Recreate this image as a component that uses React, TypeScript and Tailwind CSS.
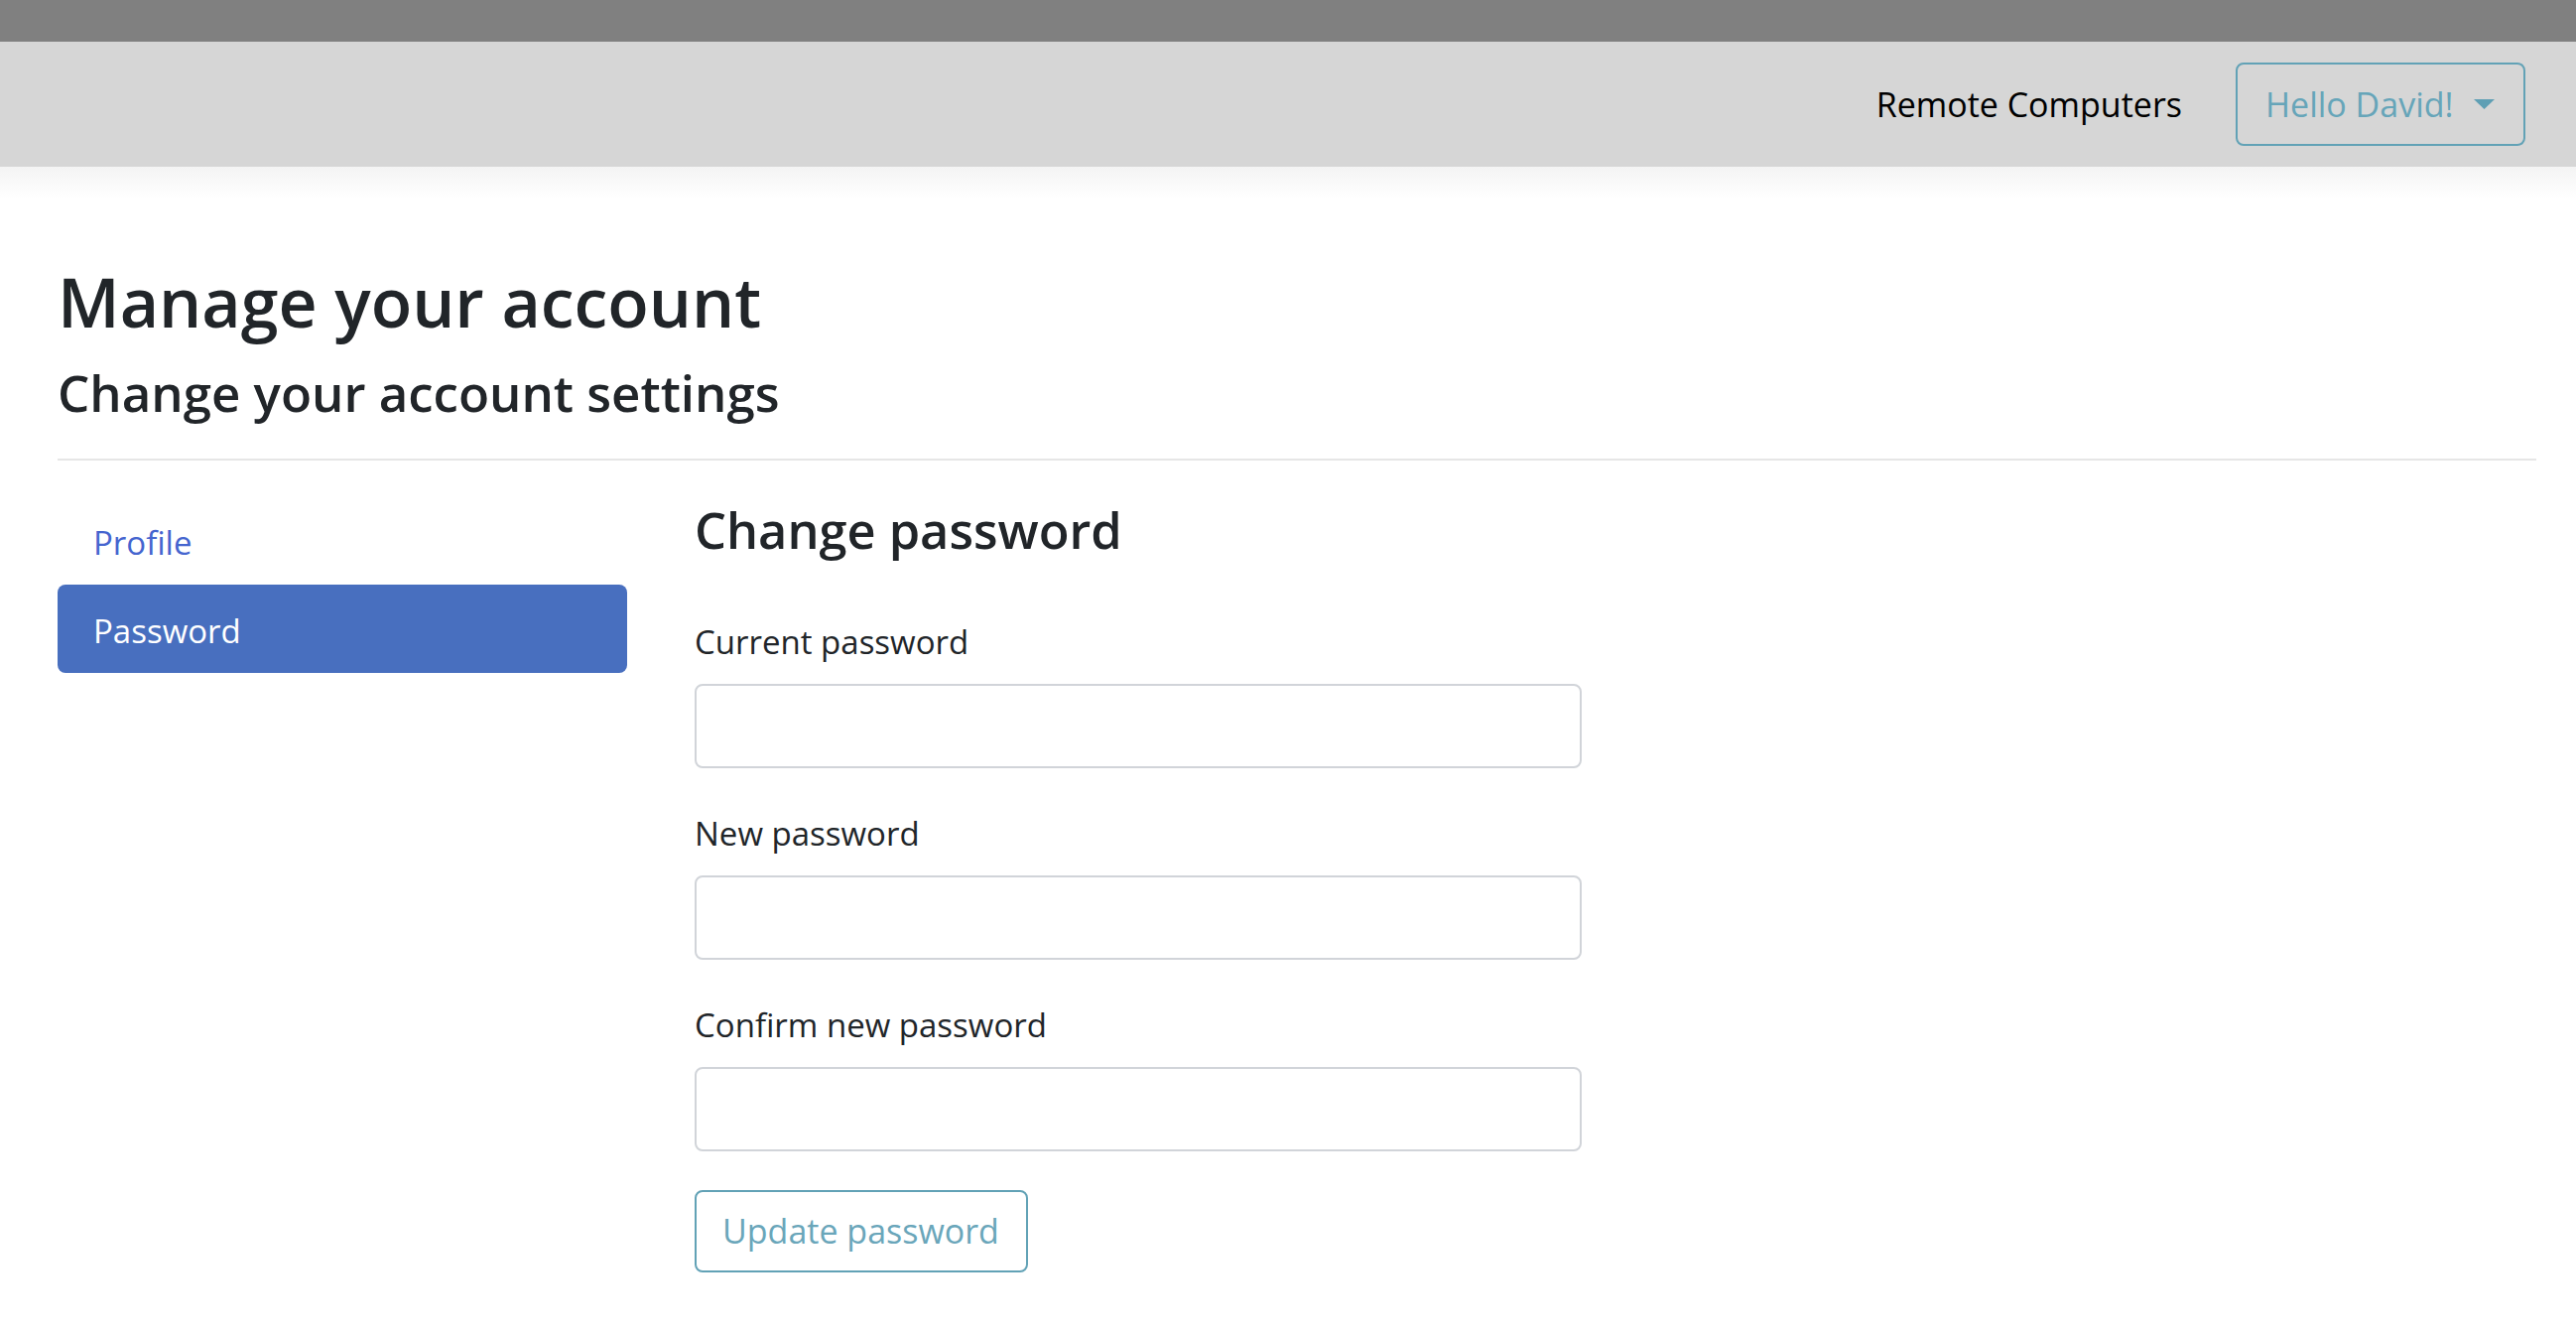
import { useState } from 'react'

const font = { fontFamily: '"Open Sans", "Noto Sans", sans-serif' }

function Field({ label }: { label: string }) {
  return (
    <div className="flex flex-col">
      <label className="text-[33px] leading-[53px] text-[#212529]">{label}</label>
      <input
        type="password"
        className="mt-[16px] h-[85px] w-[894px] rounded-[8px] border-2 border-[#d1d4d9] bg-white px-[26px] text-[33px] outline-none"
      />
    </div>
  )
}

export default function App() {
  const [tab, setTab] = useState<'profile' | 'password'>('password')

  const pill = (active: boolean) =>
    active
      ? 'rounded-[8px] bg-[#486fbf] pb-[16px] pl-[36px] pt-[20px] text-left text-[33px] leading-[53px] text-white'
      : 'rounded-[8px] pb-[16px] pl-[36px] pt-[20px] text-left text-[33px] leading-[53px] text-[#4565cf]'

  return (
    <div className="min-h-screen bg-white text-[#212529]" style={font}>
      <div className="h-[42px] bg-[#808080]" />
      <nav className="flex h-[126px] items-center justify-end bg-[#d6d6d6] pr-[51px]">
        <a className="text-[34px] leading-[53px] text-black">Remote Computers</a>
        <button className="ml-[54px] flex h-[84px] w-[292px] items-center rounded-[8px] border-2 border-[#62a2b6] pl-[28px] text-[34px] leading-[53px] text-[#66a5b9]">
          Hello David!
          <svg width="21" height="10" viewBox="0 0 21 10" className="ml-[20px]">
            <path d="M0 0 L21 0 L10.5 10 Z" fill="#5f9fb4" />
          </svg>
        </button>
      </nav>
      <div className="h-[32px] bg-gradient-to-b from-[#f4f4f4] to-white" />

      <main className="pl-[58px] pr-[40px]">
        <h1 className="mt-[62px] text-[68px] font-semibold leading-[84px]">Manage your account</h1>
        <h2 className="mt-[16px] text-[51px] font-semibold leading-[67px]">Change your account settings</h2>
        <hr className="mt-[33px] border-0 border-t-2 border-[#e6e6e6]" />

        <div className="mt-[36px] flex gap-[68px]">
          <div className="flex w-[574px] flex-col">
            <button onClick={() => setTab('profile')} className={pill(tab === 'profile')}>
              Profile
            </button>
            <button onClick={() => setTab('password')} className={pill(tab === 'password')}>
              Password
            </button>
          </div>

          <div className="flex flex-col">
            <h3 className="text-[50.5px] font-semibold leading-[67px]">Change password</h3>
            <div className="mt-[53px] flex flex-col gap-[39px]">
              <Field label="Current password" />
              <Field label="New password" />
              <Field label="Confirm new password" />
            </div>
            <button className="mt-[39px] flex h-[83px] w-[336px] items-center rounded-[8px] border-2 border-[#62a2b6] pl-[26px] text-[34px] leading-[53px] text-[#6aa6ba]">
              Update password
            </button>
          </div>
        </div>
      </main>
    </div>
  )
}
